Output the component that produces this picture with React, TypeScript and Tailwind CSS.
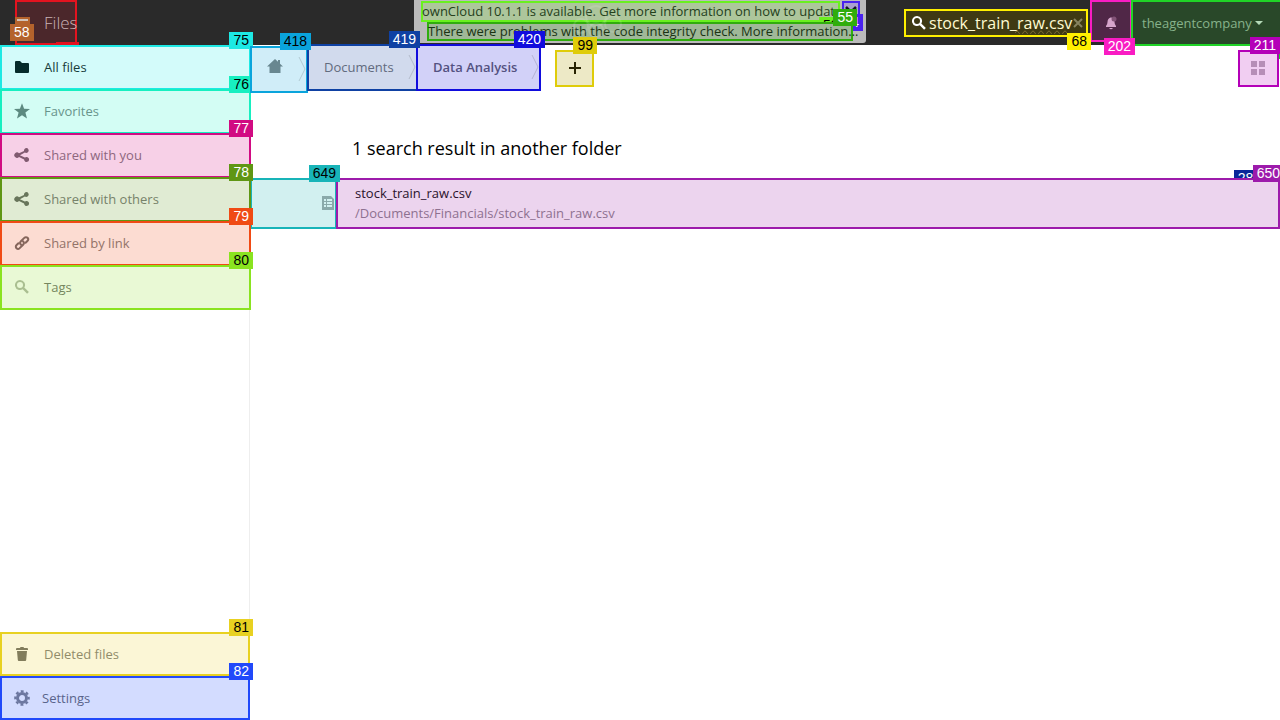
import React, { useState } from "react";
import { clsx } from "clsx";

type TagProps = { n: string; className: string; layer?: string };

function Tag({ n, className, layer = "z-20" }: TagProps) {
  return (
    <span
      className={clsx(
        "pointer-events-none absolute h-[17px] px-1 font-['Liberation_Sans',sans-serif] text-[14px] leading-[17px] font-normal whitespace-nowrap",
        layer,
        className,
      )}
    >
      {n}
    </span>
  );
}

const shapes = {
  folder: <path d="M1 3.2Q1 2 2 2h4l2 2h6q1 0 1 1v8q0 1-1 1H2q-1 0-1-1z" />,
  star: <path d="M8 .2l2.100 5.500 5.900.3-4.600 3.600 1.600 5.800L8 12.200l-5 3.200 1.600-5.800L0 6l5.900-.3z" />,
  share: (
    <path d="M12.500 1a2.500 2.500 0 0 0-2.450 3.020L5 6.300A2.700 2.700 0 1 0 5 10l5.050 2.480a2.500 2.500 0 1 0 .8-1.900L5.950 8.150 10.850 5.600A2.500 2.500 0 1 0 12.500 1z" />
  ),
  link: (
    <g fill="none" stroke="currentColor" strokeWidth="2" strokeLinecap="round">
      <path d="M7 9.800C5.800 8.600 5.900 7.300 6.900 6.300l3.400-3.400c1-1 2.300-1 3.200-.1s.9 2.200-.1 3.200L11.600 7.800" />
      <path d="M9 6.200c1.200 1.200 1.100 2.500.1 3.500l-3.400 3.400c-1 1-2.300 1-3.200.1s-.9-2.200.1-3.200L4.400 8.200" />
    </g>
  ),
  search: (
    <path fillRule="evenodd" d="M6 1a5 5 0 1 0 2.700 9.200l4.400 4.500 1.800-1.800-4.600-4.300A5 5 0 0 0 6 1zm0 2a3 3 0 1 1 0 6 3 3 0 0 1 0-6z" />
  ),
  trash: <path d="M6.500 1L6 2H3q-1 0-1 1v1h12V3q0-1-1-1h-3l-.5-1zM3 5l.8 9q.1 1 1 1h6.400q.9 0 1-1l.8-9z" />,
  gear: (
    <g fill="none" stroke="currentColor">
      <circle cx="8" cy="8" r="4.500" strokeWidth="3" />
      <circle cx="8" cy="8" r="6.700" strokeWidth="2.200" strokeDasharray="2.900 2.362" strokeDashoffset="1.450" />
    </g>
  ),
  home: <path d="M8 1L0 8.500h2.500V15h11V8.500H16L13 5.700V2h-2v1.800z" />,
  sheet: (
    <path
      fillRule="evenodd"
      d="M3 1h9L15 4v11H3zM5 4v2h2V4zM8 4v2h5V4zM5 7v2h2V7zM8 7v2h5V7zM5 10v2h2v-2zM8 10v2h5v-2z"
    />
  ),
  grid: <path d="M1 1h6v6H1zM9 1h6v6H9zM1 9h6v6H1zM9 9h6v6H9z" />,
};

function Icon({ name, className }: { name: keyof typeof shapes; className?: string }) {
  return (
    <svg viewBox="0 0 16 16" fill="currentColor" aria-hidden="true" className={clsx("size-4 shrink-0", className)}>
      {shapes[name]}
    </svg>
  );
}

type NavItem = { label: string; icon: keyof typeof shapes; n: string; box: string; tag: string; text: string; iconTone?: string };

const mainNav: NavItem[] = [
  { label: "All files", icon: "folder", n: "75", box: "border-[#1de9e4] bg-[#d3fbfa]", tag: "bg-[#1de9e4] text-black", text: "text-[#173b3b]", iconTone: "text-[#052b2b]" },
  { label: "Favorites", icon: "star", n: "76", box: "border-[#17efc0] bg-[#d3fdf4]", tag: "bg-[#17efc0] text-black", text: "text-[#69948b]", iconTone: "text-[#5c8a80]" },
  { label: "Shared with you", icon: "share", n: "77", box: "border-[#d10b82] bg-[#f7d0e7]", tag: "bg-[#d10b82] text-white", text: "text-[#8e677e]", iconTone: "text-[#805a70]" },
  { label: "Shared with others", icon: "share", n: "78", box: "border-[#5f9614] bg-[#e0ebd3]", tag: "bg-[#5f9614] text-white", text: "text-[#77826a]", iconTone: "text-[#68755b]" },
  { label: "Shared by link", icon: "link", n: "79", box: "border-[#f04a14] bg-[#fcdcd2]", tag: "bg-[#f04a14] text-white", text: "text-[#937369]", iconTone: "text-[#85665c]" },
  { label: "Tags", icon: "search", n: "80", box: "border-[#8ae320] bg-[#e9f9d5]", tag: "bg-[#8ae320] text-black", text: "text-[#75865e]", iconTone: "text-[#aabf91]" },
];

function SideLink({ item, className, tagClass }: { item: NavItem; className: string; tagClass: string }) {
  return (
    <li>
      <a href="#" className={clsx("relative flex items-center border-2 pl-3", className, item.box)}>
        <Icon name={item.icon} className={item.iconTone ?? item.text} />
        <span className={clsx("ml-[14px]", item.text)}>{item.label}</span>
        <Tag n={item.n} className={clsx("-top-[15px]", tagClass, item.tag)} />
      </a>
    </li>
  );
}

function Chevron() {
  return (
    <svg viewBox="0 0 8 26" className="absolute top-2 right-0 h-[26px] w-2" fill="none" stroke="#000" strokeOpacity="0.15" aria-hidden="true">
      <path d="M1 1l6 12-6 12" />
    </svg>
  );
}

export default function App() {
  const [query, setQuery] = useState("stock_train_raw.csv");

  return (
    <div className="flex h-screen flex-col overflow-hidden bg-white font-['Open_Sans',sans-serif] text-[13px] leading-5">
      <header className="relative z-10 flex h-[45px] shrink-0 justify-between bg-[#2a2a2a]">
        <button type="button" className="relative ml-[15px] flex h-[45px] w-[62px] items-center border-2 border-[#e3131f] bg-[#4b272b] pl-[27px] text-left text-[17px] font-light text-[#c9b2b4]">
          <span className="absolute top-[15px] -left-[2px] flex h-4 w-[15px] flex-col gap-[3px] bg-[#b4622c] px-[2px] pt-[2px]">
            <span className="h-[2px] bg-[#d2c2b7]" />
            <span className="h-[2px] bg-[#d2c2b7]" />
          </span>
          Files
          <span className="absolute -right-1 -bottom-[2px] h-[3px] w-[23px] bg-[#e3131f]" />
          <Tag n="58" className="top-[22px] -left-[7px] bg-[#b4622c] text-white" />
        </button>

        <div role="status" className="absolute top-0 left-1/2 h-[43px] w-[452px] -translate-x-1/2 rounded-b-[3px] bg-[#bbbbbb] pt-px pl-[7px] text-[#24401b]">
          <div className="relative flex h-[21px] gap-[2px]">
            <a href="#" className="relative h-[21px] w-[419px] border-2 border-[#6af01f] bg-[#adc69c] leading-[17px] whitespace-nowrap">
              <span className="-ml-px">ownCloud 10.1.1 is available. Get more information on how to update</span>
              <Tag n="53" className="top-[14px] left-[396px] bg-[#6af01f] text-black" />
            </a>
            <button type="button" aria-label="Dismiss" className="relative h-[21px] w-[18px] border-2 border-[#4a22f0] bg-[#aaa0d0] text-[#17122e]">
              <svg viewBox="0 0 12 12" className="mx-auto size-3" fill="none" stroke="currentColor" strokeWidth="2.500">
                <path d="M1 1l10 10M11 1L1 11" />
              </svg>
              <Tag n="54" className="top-[11px] -right-[5px] bg-[#4a22f0] text-white" />
            </button>
          </div>
          <a href="#" className="relative z-30 ml-[6px] block h-[19px] w-[426px] border-2 border-[#30ad0d] bg-[#a0b898] leading-[15px] whitespace-nowrap text-[#1a3314]">
            <span className="-ml-px">There were problems with the code integrity check. More information…</span>
            <Tag n="55" className="-top-[15px] -right-[6px] bg-[#30ad0d] text-white" />
          </a>
          <svg viewBox="0 0 60 36" className="pointer-events-none absolute top-1 left-[154px] z-30 h-9 w-[60px]" fill="none" stroke="#fff" strokeOpacity="0.12" strokeWidth="2" aria-hidden="true">
            <circle cx="28" cy="12" r="10" />
            <circle cx="13" cy="22" r="7" />
            <circle cx="45" cy="20" r="8" />
            <circle cx="28" cy="26" r="7" />
          </svg>
        </div>

        <div className="flex">
          <label className="relative mt-[9px] mr-[2px] flex h-7 w-[184px] items-center border-2 border-[#fff000] bg-[#3f3a13] pl-[5px] text-[#fffbd2]">
            <Icon name="search" className="text-white" />
            <span className="sr-only">Search</span>
            <input
              type="text"
              value={query}
              onChange={(e) => setQuery(e.target.value)}
              spellCheck={false}
              className="ml-[2px] w-[144px] min-w-0 bg-transparent text-[16px] leading-5 outline-none"
            />
            <svg viewBox="0 0 10 10" className="size-[10px] shrink-0" fill="none" stroke="#87835f" strokeWidth="2" aria-hidden="true">
              <path d="M1 1l8 8M9 1L1 9" />
            </svg>
            <svg viewBox="0 0 52 4" className="absolute top-[19px] left-[109px] h-1 w-[52px]" fill="none" stroke="#7b6c32" aria-hidden="true">
              <path d="M0 3q2-4 4 0t4 0t4 0t4 0t4 0t4 0t4 0t4 0t4 0t4 0t4 0t4 0t4 0" />
            </svg>
            <Tag n="68" className="top-[22px] -right-[5px] bg-[#fff000] text-black" />
          </label>
          <button type="button" aria-label="Notifications" className="relative flex h-[42px] w-[42px] items-center justify-center border-2 border-[#f91cc3] bg-[#502747] text-[#d6a5cb]">
            <svg viewBox="0 0 12 14" className="mt-1 h-[14px] w-3" fill="currentColor" aria-hidden="true">
              <path d="M5.500 1.500Q2.500 2.500 2.500 6 2.500 8.500 1 10v1h10v-1Q9.500 8.500 9.500 6 9.500 3 6.500 1.500zM4 12h4q-2 2.500-4 0z" />
              <circle cx="9" cy="3" r="2.500" fill="#825276" />
            </svg>
            <Tag n="202" className="top-[36px] -right-[5px] bg-[#f91cc3] text-white" />
          </button>
          <button type="button" className="relative -ml-px flex h-[46px] w-[149px] items-center border-2 border-r-0 border-[#20d427] bg-[#294829] pl-[9px] text-[#87b28b]">
            theagentcompany
            <svg viewBox="0 0 8 4" className="ml-[3px] h-1 w-2" fill="#b5dab8" aria-hidden="true">
              <path d="M0 0h8L4 4z" />
            </svg>
            <span className="absolute top-[43px] right-0 h-[14px] w-px bg-[#20d427]" />
          </button>
        </div>
      </header>

      <div className="flex min-h-0 flex-1">
        <nav aria-label="Files" className="relative z-10 flex w-[250px] shrink-0 flex-col justify-between border-r border-[#eeeeee]">
          <ul className="-mr-[2px]">
            {mainNav.map((item) => (
              <SideLink key={item.n} item={item} className="-mb-px h-[45px] pb-[2px]" tagClass="-right-[4px]" />
            ))}
          </ul>
          <ul className="-mr-px">
            <SideLink
              item={{ label: "Deleted files", icon: "trash", n: "81", box: "border-[#e8d121] bg-[#fbf6d6]", tag: "bg-[#e8d121] text-black", text: "text-[#918c6a]", iconTone: "text-[#827d5c]" }}
              className="h-11"
              tagClass="-right-[5px]"
            />
            <li>
              <button type="button" className="relative flex h-11 w-full items-center border-2 border-[#2149fa] bg-[#d3dcff] pl-3 text-[#59648b]">
                <Icon name="gear" className="text-[#6c77a0]" />
                <span className="ml-3">Settings</span>
                <Tag n="82" className="-top-[15px] -right-[5px] bg-[#2149fa] text-white" />
              </button>
            </li>
          </ul>
        </nav>

        <main className="min-w-0 flex-1">
          <div className="relative z-10 flex items-start justify-between">
            <div className="flex items-start">
              <nav aria-label="Breadcrumb" className="flex items-start">
                <a href="#" aria-label="Home" className="relative mt-px flex h-[47px] w-[58px] items-center border-2 border-[#0aa4dc] bg-[#d0edf8] pb-[7px] pl-[15px] text-[#688790]">
                  <Icon name="home" />
                  <Chevron />
                  <Tag n="418" className="-top-[15px] -right-[5px] bg-[#0aa4dc] text-black" />
                </a>
                <a href="#" className="relative -mt-px -ml-px flex h-[47px] w-[111px] items-center border-2 border-[#0f41a3] bg-[#d1daed] pb-[2px] pl-[15px] text-[#626b7e]">
                  Documents
                  <Chevron />
                  <Tag n="419" className="-top-[15px] -right-[4px] bg-[#0f41a3] text-white" />
                </a>
                <a href="#" className="relative -mt-px -ml-[2px] flex h-[47px] w-[125px] items-center border-2 border-[#110cdd] bg-[#d2d1f8] pb-[2px] pl-[15px] font-semibold text-[#545281]">
                  Data Analysis
                  <Chevron />
                  <Tag n="420" className="-top-[15px] -right-[6px] bg-[#110cdd] text-white" />
                </a>
              </nav>
              <button type="button" aria-label="New" className="relative mt-[5px] ml-[14px] flex h-[37px] w-[39px] items-center justify-center border-2 border-[#dfcc0a] bg-[#ede9c6] pb-[2px] text-[#282302]">
                <svg viewBox="0 0 12 12" className="size-3" stroke="currentColor" strokeWidth="2" aria-hidden="true">
                  <path d="M6 0v12M0 6h12" />
                </svg>
                <Tag n="99" className="-top-[15px] -right-[5px] bg-[#dfcc0a] text-black" />
              </button>
            </div>
            <button type="button" aria-label="Grid view" className="relative mt-[5px] mr-px flex h-[37px] w-[41px] items-center justify-center border-2 border-[#b400b8] bg-[#f1cef2] pr-[2px] pb-[2px] text-[#b68eb7]">
              <Icon name="grid" />
              <Tag n="211" className="-top-[15px] -right-[3px] bg-[#b400b8] text-white" />
            </button>
          </div>

          <h2 className="mt-[43px] ml-[102px] text-[18px] leading-6 text-black">1 search result in another folder</h2>

          <table className="mt-[18px] w-full table-fixed border-collapse">
            <tbody>
              <tr>
                <td className="relative w-[86px] p-0">
                  <div className="flex h-[51px] w-[87px] items-center justify-end border-2 border-[#18b4b8] bg-[#d2f0f0] pb-[2px] text-[#8aa9aa]">
                    <Icon name="sheet" />
                  </div>
                  <Tag n="649" className="-top-[13px] -right-[4px] bg-[#18b4b8] text-black" />
                </td>
                <td className="relative p-0">
                  <Tag n="284" layer="z-0" className="-top-[8px] right-[15px] bg-[#0a2799] text-white" />
                  <a href="#" className="relative z-10 block h-[51px] border-2 border-[#9d1bab] bg-[#ecd4ee] pt-[3px] pl-[17px] text-[#2a122c]">
                    <span className="block">stock_train_raw.csv</span>
                    <span className="block text-[#8e7190]">/Documents/Financials/stock_train_raw.csv</span>
                  </a>
                  <Tag n="650" className="-top-[13px] -right-[4px] bg-[#9d1bab] text-white" />
                </td>
              </tr>
            </tbody>
          </table>
        </main>
      </div>
    </div>
  );
}
